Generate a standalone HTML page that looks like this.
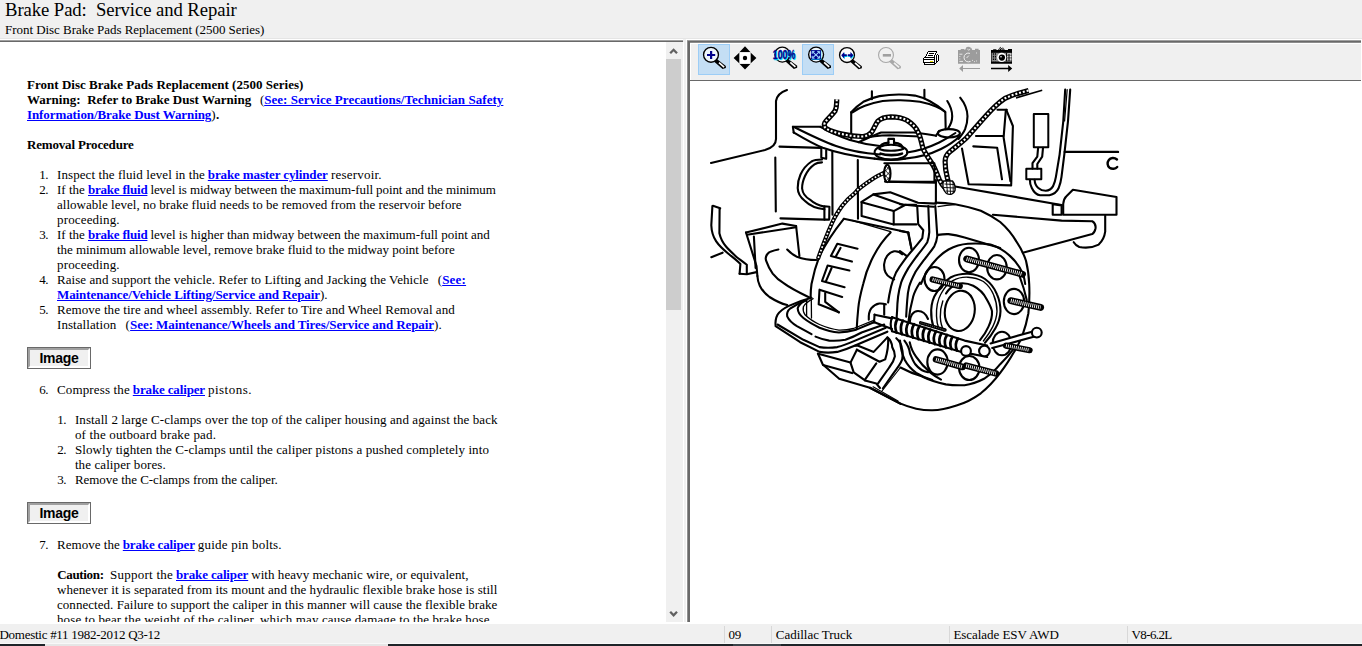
<!DOCTYPE html>
<html><head><meta charset="utf-8"><title>Brake Pad: Service and Repair</title>
<style>
html,body{margin:0;padding:0;}
body{width:1362px;height:646px;overflow:hidden;background:#f0f0f0;font-family:"Liberation Serif",serif;color:#000;position:relative;}
.abs{position:absolute;}
#hdr1{left:5px;top:-1px;font-size:18.67px;line-height:22px;white-space:pre;letter-spacing:-0.065px;}
#hdr2{left:5px;top:22px;font-size:13px;line-height:15px;white-space:pre;letter-spacing:-0.043px;}
#left{left:0;top:42px;width:666px;height:580px;background:#fff;overflow:hidden;}
#leftborder{left:0;top:39px;width:683px;height:3px;background:linear-gradient(#fff 0,#fff 1px,#a0a0a0 1px,#a0a0a0 2px,#696969 2px);}
#sb{left:666px;top:42px;width:17px;height:580px;background:#f0f0f0;border-right:1px solid #fff;}
#thumb{left:666px;top:59px;width:15px;height:251px;background:#cdcdcd;}
.ln{position:absolute;font-size:13px;line-height:15px;height:15px;white-space:pre;}
b.ln{font-weight:bold;}
a.ln{color:#0000ff;font-weight:bold;text-decoration:underline;}
.btn{position:absolute;left:27px;width:62px;height:20px;border:1px solid #696969;background:#f0f0f0;box-sizing:content-box;}
.btn i{position:absolute;left:0;top:0;right:0;bottom:0;border-style:solid;border-width:2px;border-color:#a0a0a0 #fff #fff #a0a0a0;}
.btn span{position:absolute;left:0;right:0;top:1.75px;text-align:center;font:bold 14px/16px "Liberation Sans",sans-serif;letter-spacing:-0.3px;}
#rightborder{left:690px;top:42px;width:672px;height:580px;background:#fff;}
#status{left:0;top:624px;width:1362px;height:20px;background:#f0f0f0;}
.st{position:absolute;top:627px;font-size:13px;line-height:15px;white-space:pre;}
</style></head><body>
<div class="abs" id="hdr1">Brake Pad:  Service and Repair</div>
<div class="abs" id="hdr2">Front Disc Brake Pads Replacement (2500 Series)</div>
<div class="abs" style="left:0;top:38px;width:1362px;height:1px;background:#e5e5e5;"></div>
<div class="abs" id="leftborder"></div>
<div class="abs" id="left">
<!--LT0-->
<b class="ln" id="sg0" style="left:27.0px;top:35px;letter-spacing:0.017px;">Front Disc Brake Pads Replacement (2500 Series)</b>
<b class="ln" id="sg1" style="left:27.0px;top:50px;letter-spacing:0.021px;">Warning:  Refer to Brake Dust Warning</b>
<span class="ln" id="sg2" style="left:260.0px;top:50px;">(</span>
<a class="ln" id="sg3" style="left:264.2px;top:50px;letter-spacing:0.047px;">See: Service Precautions/Technician Safety</a>
<a class="ln" id="sg4" style="left:27.0px;top:65px;letter-spacing:-0.085px;">Information/Brake Dust Warning</a>
<span class="ln" id="sg5" style="left:211.3px;top:65px;">)</span>
<b class="ln" id="sg6" style="left:216.0px;top:65px;">.</b>
<b class="ln" id="sg7" style="left:27.0px;top:95px;letter-spacing:-0.173px;">Removal Procedure</b>
<span class="ln" id="sg8" style="left:39.3px;top:125px;letter-spacing:-0.500px;">1.</span>
<span class="ln" id="sg9" style="left:39.3px;top:140px;letter-spacing:-0.500px;">2.</span>
<span class="ln" id="sg10" style="left:39.3px;top:185px;letter-spacing:-0.500px;">3.</span>
<span class="ln" id="sg11" style="left:39.3px;top:230px;letter-spacing:-0.500px;">4.</span>
<span class="ln" id="sg12" style="left:39.3px;top:260px;letter-spacing:-0.500px;">5.</span>
<span class="ln" id="sg13" style="left:39.3px;top:340px;letter-spacing:-0.500px;">6.</span>
<span class="ln" id="sg14" style="left:39.3px;top:495px;letter-spacing:-0.500px;">7.</span>
<span class="ln" id="sg15" style="left:57.3px;top:370px;letter-spacing:-0.500px;">1.</span>
<span class="ln" id="sg16" style="left:57.3px;top:400px;letter-spacing:-0.500px;">2.</span>
<span class="ln" id="sg17" style="left:57.3px;top:430px;letter-spacing:-0.500px;">3.</span>
<span class="ln" id="sg18" style="left:57.0px;top:125px;letter-spacing:0.081px;">Inspect the fluid level in the</span>
<a class="ln" id="sg19" style="left:207.8px;top:125px;letter-spacing:-0.121px;">brake master cylinder</a>
<span class="ln" id="sg20" style="left:331.0px;top:125px;letter-spacing:0.207px;">reservoir.</span>
<span class="ln" id="sg21" style="left:57.0px;top:140px;letter-spacing:0.017px;">If the</span>
<a class="ln" id="sg22" style="left:88.0px;top:140px;letter-spacing:-0.215px;">brake fluid</a>
<span class="ln" id="sg23" style="left:150.4px;top:140px;letter-spacing:-0.095px;">level is midway between the maximum-full point and the minimum</span>
<span class="ln" id="sg24" style="left:57.0px;top:155px;letter-spacing:0.027px;">allowable level, no brake fluid needs to be removed from the reservoir before</span>
<span class="ln" id="sg25" style="left:57.0px;top:170px;letter-spacing:0.162px;">proceeding.</span>
<span class="ln" id="sg26" style="left:57.0px;top:185px;letter-spacing:0.017px;">If the</span>
<a class="ln" id="sg27" style="left:88.0px;top:185px;letter-spacing:-0.215px;">brake fluid</a>
<span class="ln" id="sg28" style="left:150.4px;top:185px;letter-spacing:-0.017px;">level is higher than midway between the maximum-full point and</span>
<span class="ln" id="sg29" style="left:57.0px;top:200px;letter-spacing:-0.049px;">the minimum allowable level, remove brake fluid to the midway point before</span>
<span class="ln" id="sg30" style="left:57.0px;top:215px;letter-spacing:0.162px;">proceeding.</span>
<span class="ln" id="sg31" style="left:57.0px;top:230px;letter-spacing:0.060px;">Raise and support the vehicle. Refer to Lifting and Jacking the Vehicle</span>
<span class="ln" id="sg32" style="left:437.8px;top:230px;">(</span>
<a class="ln" id="sg33" style="left:442.2px;top:230px;letter-spacing:0.198px;">See:</a>
<a class="ln" id="sg34" style="left:57.0px;top:245px;letter-spacing:-0.091px;">Maintenance/Vehicle Lifting/Service and Repair</a>
<span class="ln" id="sg35" style="left:320.0px;top:245px;">).</span>
<span class="ln" id="sg36" style="left:57.0px;top:260px;letter-spacing:0.050px;">Remove the tire and wheel assembly. Refer to Tire and Wheel Removal and</span>
<span class="ln" id="sg37" style="left:57.0px;top:275px;letter-spacing:0.067px;">Installation</span>
<span class="ln" id="sg38" style="left:125.4px;top:275px;">(</span>
<a class="ln" id="sg39" style="left:130.1px;top:275px;letter-spacing:-0.079px;">See: Maintenance/Wheels and Tires/Service and Repair</a>
<span class="ln" id="sg40" style="left:434.1px;top:275px;">).</span>
<span class="ln" id="sg41" style="left:57.0px;top:340px;letter-spacing:0.147px;">Compress the</span>
<a class="ln" id="sg42" style="left:132.8px;top:340px;letter-spacing:-0.140px;">brake caliper</a>
<span class="ln" id="sg43" style="left:208.0px;top:340px;letter-spacing:0.476px;">pistons.</span>
<span class="ln" id="sg44" style="left:74.9px;top:370px;letter-spacing:0.097px;">Install 2 large C-clamps over the top of the caliper housing and against the back</span>
<span class="ln" id="sg45" style="left:74.9px;top:385px;letter-spacing:0.169px;">of the outboard brake pad.</span>
<span class="ln" id="sg46" style="left:74.9px;top:400px;letter-spacing:0.092px;">Slowly tighten the C-clamps until the caliper pistons a pushed completely into</span>
<span class="ln" id="sg47" style="left:74.9px;top:415px;letter-spacing:0.097px;">the caliper bores.</span>
<span class="ln" id="sg48" style="left:74.9px;top:430px;letter-spacing:-0.039px;">Remove the C-clamps from the caliper.</span>
<span class="ln" id="sg49" style="left:57.0px;top:495px;letter-spacing:0.043px;">Remove the</span>
<a class="ln" id="sg50" style="left:122.8px;top:495px;letter-spacing:-0.155px;">brake caliper</a>
<span class="ln" id="sg51" style="left:197.8px;top:495px;letter-spacing:0.217px;">guide pin bolts.</span>
<b class="ln" id="sg52" style="left:57.2px;top:525px;letter-spacing:-0.328px;">Caution:</b>
<span class="ln" id="sg53" style="left:110.1px;top:525px;letter-spacing:0.244px;">Support the</span>
<a class="ln" id="sg54" style="left:176.0px;top:525px;letter-spacing:-0.140px;">brake caliper</a>
<span class="ln" id="sg55" style="left:251.2px;top:525px;letter-spacing:0.063px;">with heavy mechanic wire, or equivalent,</span>
<span class="ln" id="sg56" style="left:57.0px;top:540px;letter-spacing:0.050px;">whenever it is separated from its mount and the hydraulic flexible brake hose is still</span>
<span class="ln" id="sg57" style="left:57.0px;top:555px;letter-spacing:0.042px;">connected. Failure to support the caliper in this manner will cause the flexible brake</span>
<span class="ln" id="sg58" style="left:57.0px;top:570px;letter-spacing:0.117px;">hose to bear the weight of the caliper, which may cause damage to the brake hose</span>
<div class="btn" style="top:305px"><i></i><span>Image</span></div>
<div class="btn" style="top:460px"><i></i><span>Image</span></div>
<!--LT1-->
</div>
<div class="abs" id="sb"></div>
<div class="abs" id="thumb"></div>
<svg class="abs" style="left:666px;top:42px" width="17" height="580" viewBox="666 42 17 580" fill="none" stroke="#606060" stroke-width="2.3"><path d="M670.2 53.3 L673.6 49.8 L677 53.3"/><path d="M670.2 611.8 L673.6 615.3 L677 611.8"/></svg>
<div class="abs" id="rightborder"></div>
<!--R0-->
<div class="abs" style="left:690px;top:43px;width:672px;height:37px;background:#f0f0f0;border-top:1px solid #fff;border-left:1px solid #fff;box-sizing:border-box;"></div>
<div class="abs" style="left:690px;top:80px;width:672px;height:1px;background:#696969;"></div>
<div class="abs" style="left:698px;top:44px;width:32px;height:31px;box-sizing:border-box;background:#c4def4;border:1px solid #9ccdf6;"></div>
<div class="abs" style="left:802px;top:44px;width:32px;height:31px;box-sizing:border-box;background:#c4def4;border:1px solid #9ccdf6;"></div>
<svg class="abs" style="left:689px;top:42px" width="673" height="38" viewBox="689 42 673 38">
<defs>
<g id="mag">
<path d="M5.2 3.8 L14.9 11.2 L14.9 13.2 L11.6 14.3 L2.9 6.6 Z" fill="#000"/>
<path d="M8 7.8 L13.1 12.3" stroke="#fff" stroke-width="1.7"/>
<circle cx="0" cy="0" r="7.45" fill="#fff" fill-opacity="0.7" stroke="#000" stroke-width="1.35"/>
</g>
<g id="magd">
<path d="M5.2 3.8 L14.9 11.2 L14.9 13.2 L11.6 14.3 L2.9 6.6 Z" fill="#a8a8a8"/>
<path d="M8 7.8 L13.1 12.3" stroke="#f0f0f0" stroke-width="1.7"/>
<circle cx="0" cy="0" r="7.45" fill="#f0f0f0" stroke="#a8a8a8" stroke-width="1.1"/>
</g>
</defs>
<!-- zoom in -->
<use href="#mag" x="711" y="54.8"/>
<path d="M707 55 H715.2 M711.1 51 V59" stroke="#00008b" stroke-width="2.2"/>
<!-- pan -->
<path d="M745 46.3 L750.6 52.2 H739.4 Z M745 69.5 L750.6 63.8 H739.4 Z M733.6 58 L739.5 52.5 V63.5 Z M756.4 58 L750.5 52.5 V63.5 Z" fill="#000"/>
<rect x="739.6" y="52.3" width="10.8" height="11.4" fill="#fff"/>
<circle cx="745" cy="58" r="2.2" fill="#000"/>
<!-- 100% -->
<use href="#mag" x="782.3" y="54.6"/>
<text x="773.4" y="59.7" font-family="Liberation Sans, sans-serif" font-weight="bold" font-size="12" textLength="22.5" lengthAdjust="spacingAndGlyphs" fill="#00e5ff" stroke="#00e5ff" stroke-width="0.3">100%</text>
<text x="772.8" y="59" font-family="Liberation Sans, sans-serif" font-weight="bold" font-size="12" textLength="22.5" lengthAdjust="spacingAndGlyphs" fill="#00008b" stroke="#00008b" stroke-width="0.3">100%</text>
<!-- fit -->
<use href="#mag" x="816.1" y="54.6"/>
<rect x="811.3" y="50.6" width="10" height="9.4" fill="#00e5ff"/>
<rect x="810.9" y="50.1" width="10" height="9.4" fill="#00008b"/>
<path d="M812.6 51.8 L819.2 57.9 M819.2 51.8 L812.6 57.9" stroke="#9fd8ff" stroke-width="1.1"/>
<path d="M812.2 53.8 V51.4 H814.6 M817.2 51.4 H819.6 V53.8 M819.6 55.8 V58.2 H817.2 M814.6 58.2 H812.2 V55.8" stroke="#9fd8ff" stroke-width="1" fill="none"/>
<!-- fit width -->
<use href="#mag" x="847" y="55"/>
<path d="M841.8 56 l3 -3.2 v2.2 h2.6 v2 h-2.6 v2.2 z M854 56 l-3 -3.2 v2.2 h-2.6 v2 h2.6 v2.2 z" fill="#00e5ff"/>
<path d="M841.2 55.3 l3 -3.2 v2.2 h2.6 v2 h-2.6 v2.2 z M853.4 55.3 l-3 -3.2 v2.2 h-2.6 v2 h2.6 v2.2 z" fill="#00008b"/>
<!-- zoom out disabled -->
<use href="#magd" x="886" y="55"/>
<rect x="882.8" y="54" width="8.2" height="2.6" fill="#a0a0a0"/>
<!-- print -->
<g shape-rendering="crispEdges" stroke="none">
<rect x="928" y="51" width="9" height="1" fill="#000"/>
<rect x="927" y="52" width="1" height="1" fill="#000"/>
<rect x="928" y="52" width="8" height="1" fill="#fff"/>
<rect x="936" y="52" width="1" height="1" fill="#000"/>
<rect x="927" y="53" width="1" height="1" fill="#000"/>
<rect x="928" y="53" width="1" height="1" fill="#fff"/>
<rect x="929" y="53" width="5" height="1" fill="#000"/>
<rect x="934" y="53" width="1" height="1" fill="#fff"/>
<rect x="935" y="53" width="1" height="1" fill="#000"/>
<rect x="926" y="54" width="1" height="1" fill="#000"/>
<rect x="927" y="54" width="8" height="1" fill="#fff"/>
<rect x="935" y="54" width="1" height="1" fill="#000"/>
<rect x="936" y="54" width="1" height="1" fill="#fff"/>
<rect x="937" y="54" width="1" height="1" fill="#000"/>
<rect x="926" y="55" width="1" height="1" fill="#000"/>
<rect x="927" y="55" width="1" height="1" fill="#fff"/>
<rect x="928" y="55" width="5" height="1" fill="#000"/>
<rect x="933" y="55" width="1" height="1" fill="#fff"/>
<rect x="934" y="55" width="1" height="1" fill="#000"/>
<rect x="935" y="55" width="1" height="1" fill="#fff"/>
<rect x="936" y="55" width="1" height="1" fill="#000"/>
<rect x="937" y="55" width="1" height="1" fill="#fff"/>
<rect x="938" y="55" width="1" height="1" fill="#000"/>
<rect x="925" y="56" width="1" height="1" fill="#000"/>
<rect x="926" y="56" width="8" height="1" fill="#fff"/>
<rect x="934" y="56" width="1" height="1" fill="#000"/>
<rect x="935" y="56" width="1" height="1" fill="#fff"/>
<rect x="936" y="56" width="1" height="1" fill="#000"/>
<rect x="937" y="56" width="1" height="1" fill="#fff"/>
<rect x="938" y="56" width="1" height="1" fill="#000"/>
<rect x="924" y="57" width="11" height="1" fill="#000"/>
<rect x="935" y="57" width="1" height="1" fill="#fff"/>
<rect x="936" y="57" width="1" height="1" fill="#000"/>
<rect x="937" y="57" width="1" height="1" fill="#fff"/>
<rect x="938" y="57" width="1" height="1" fill="#000"/>
<rect x="923" y="58" width="1" height="1" fill="#000"/>
<rect x="924" y="58" width="10" height="1" fill="#fff"/>
<rect x="934" y="58" width="1" height="1" fill="#000"/>
<rect x="935" y="58" width="1" height="1" fill="#fff"/>
<rect x="936" y="58" width="1" height="1" fill="#000"/>
<rect x="937" y="58" width="1" height="1" fill="#fff"/>
<rect x="938" y="58" width="1" height="1" fill="#000"/>
<rect x="923" y="59" width="12" height="1" fill="#000"/>
<rect x="935" y="59" width="1" height="1" fill="#fff"/>
<rect x="936" y="59" width="1" height="1" fill="#000"/>
<rect x="937" y="59" width="1" height="1" fill="#fff"/>
<rect x="938" y="59" width="1" height="1" fill="#000"/>
<rect x="923" y="60" width="1" height="1" fill="#000"/>
<rect x="924" y="60" width="10" height="1" fill="#fff"/>
<rect x="934" y="60" width="1" height="1" fill="#000"/>
<rect x="935" y="60" width="1" height="1" fill="#fff"/>
<rect x="936" y="60" width="1" height="1" fill="#000"/>
<rect x="937" y="60" width="1" height="1" fill="#fff"/>
<rect x="938" y="60" width="1" height="1" fill="#000"/>
<rect x="923" y="61" width="1" height="1" fill="#000"/>
<rect x="924" y="61" width="6" height="1" fill="#fff"/>
<rect x="930" y="61" width="3" height="1" fill="#e8e000"/>
<rect x="933" y="61" width="1" height="1" fill="#fff"/>
<rect x="934" y="61" width="1" height="1" fill="#000"/>
<rect x="935" y="61" width="1" height="1" fill="#fff"/>
<rect x="936" y="61" width="2" height="1" fill="#000"/>
<rect x="923" y="62" width="12" height="1" fill="#000"/>
<rect x="935" y="62" width="1" height="1" fill="#fff"/>
<rect x="936" y="62" width="1" height="1" fill="#000"/>
<rect x="924" y="63" width="1" height="1" fill="#000"/>
<rect x="925" y="63" width="9" height="1" fill="#fff"/>
<rect x="934" y="63" width="2" height="1" fill="#000"/>
<rect x="924" y="64" width="11" height="1" fill="#000"/>
</g>
<!-- camera disabled -->
<g>
<path d="M958 50 H960.5 L961 49 H964 L965 50 L966.6 47 L969 46.8 L971.4 48 L972.2 50 H975 V48.8 H978.6 V50 H980 V63.8 H958 Z" fill="#9c9c9c"/>
<path d="M970 53.4 a4.4 4.4 0 1 0 0.4 8" stroke="#f0f0f0" stroke-width="1" fill="none"/>
<path d="M966.6 58 l2.2 -2.4" stroke="#f0f0f0" stroke-width="0.9"/>
<path d="M959.4 54.2 h3 M959.4 61.4 h3.6" stroke="#f0f0f0" stroke-width="0.9"/>
<path d="M959.4 56.5 h0.9 M959.4 59 h0.9 M976 53 h0.9 M967.4 49.2 l1.4 1 1.4 -1 M969.4 61.6 h0.9 M972 60.4 h0.9 M974 61.6 h0.9 M976 61 h0.9" stroke="#f0f0f0" stroke-width="0.9" fill="none"/>
<path d="M959.2 68.5 L963 65 V68 H980 V69 H963 V72 Z" fill="#9c9c9c"/>
</g>
<!-- camera enabled -->
<g>
<path d="M991 50 H993 L993.4 49.2 H996 L996.8 50 H998 L1000.4 46.8 L1001.2 48.2 L1003 47.6 L1005 50 H1008 V49 H1012 V50 V63.8 H991 Z" fill="#000"/>
<rect x="991.6" y="52.8" width="20" height="8.8" fill="#8c8c8c"/>
<path d="M999 49.6 l1.4 -1.2 1.2 1 1.6 -0.8 1 1.2" stroke="#f0f0f0" stroke-width="0.8" fill="none"/>
<path d="M993.4 53.2 v8 M995.4 53.2 v8" stroke="#000" stroke-width="1.1" stroke-dasharray="1.6 1"/>
<path d="M1007 54 h4.4 M1007 56.6 h4.4 M1007 59.2 h4.4" stroke="#fff" stroke-width="0.9"/>
<path d="M1006.6 53 v8.4 M1009 54 v7" stroke="#000" stroke-width="1"/>
<circle cx="1001.7" cy="57.4" r="4.6" fill="#fff"/>
<circle cx="1001.9" cy="57.6" r="3.1" fill="#000"/>
<circle cx="1001" cy="56.8" r="0.8" fill="#fff"/>
<path d="M1012.2 68.5 L1008.2 65 V67.8 H991 V69.2 H1008.2 V72 Z" fill="#000"/>
</g>
</svg>
<!--D0-->
<svg class="abs" style="left:689px;top:81px" width="672" height="541" viewBox="689 81 672 541" fill="none" stroke="#000" stroke-width="2.1" stroke-linecap="round" stroke-linejoin="round">
<!-- ===== top-left body lines ===== -->
<g id="g-body">
<path d="M787 90 C781 92 777 95 776 101 L776 139 C776 145 772 148 765 150 L711 163"/>
<path d="M775.3 157.5 L775.8 211.5"/>
<path d="M779.5 146.6 L821 147.8" stroke-width="2.2"/>
<path d="M780.5 218.3 L824.4 219.6" stroke-width="2.2"/>
<path d="M832.3 151.9 L832.5 214.7"/>
<path d="M857.8 160 L858 218.8"/>
<path d="M821.3 148.6 V157.5 M826.2 150.2 V158.5 M821.3 157.8 L826.2 158.8"/>
<!-- C bracket double curve -->
<path d="M822 159.5 C817 159.6 814 160 811.5 161.5 C807 164.5 803 169 800.5 174.5 C798.5 179 797.6 184 797.7 188 C797.8 193 800.5 197.5 805 201 C810 206 817 208.5 824.4 209.3"/>
<path d="M822 162.4 C819 162.5 816.5 163 814.5 164.3 C810.5 167 807.3 171 805 176 C803 180.5 802 185 802.1 188.5 C802.6 193 805.5 197 809.9 199.6 C814 203.5 819 205.6 824.4 206.6"/>
<path d="M824.4 206.2 L829.4 206.8 L829.2 219.6 L824.4 219.6 Z"/>
</g>
<!-- ===== upper control arm ===== -->
<g id="g-uca">
<path d="M792.9 126.8 L820.4 126.8"/>
<path d="M792.9 126.8 L793.7 132.5"/>
<path d="M793.7 132.5 C803 138 813 144 822.8 147.8 C840 154 858 157 874.5 158.6"/>
<path d="M795 127.5 C808 134 822 141 836 146 C850 151 866 153.5 880 154.5"/>
<path d="M820.4 126.8 C828 131 838 136 850 140 C860 143 870 145 880 146"/>
<path d="M858.5 142.2 C866 139 874 135 881.1 132.5 L913.4 132.5 C921 133 929 134.5 936 135.7"/>
<path d="M862 138.6 C870 136.5 880 135.5 890 135.3 L920 136.5"/>
<path d="M936 135.7 L939.2 130.8"/>
<ellipse cx="948.9" cy="133.3" rx="11" ry="4.2"/>
<path d="M907 152.5 C918 151 930 147 939.2 142.5 C946 139 951 136 955.4 133"/>
<path d="M905 158.6 C918 157.5 931 154 941 149 C950 144.5 956 140 960 136"/>
<path d="M874.5 158.6 C884 160 896 160.5 905 158.6"/>
<!-- ball joint nut -->
<ellipse cx="891" cy="152.2" rx="16.4" ry="7.4"/>
<path d="M879.5 149 C879.5 145 883 143 888.4 142.6 M894 142.6 C899 143 902.9 145 902.9 149"/>
<path d="M888.4 145 V138.9 H894 V145"/>
<path d="M879.5 149 C884 151.3 898 151.3 902.9 149"/>
<path d="M880.5 153.6 C886 155.6 897 155.6 902 153.6" stroke-width="2.6"/>
</g>
<!-- ===== spring seat ===== -->
<g id="g-spring">
<path d="M871.9 91.3 V99.3 M924.4 89.7 V98.5"/>
<path d="M851.2 112.3 C855 108 859 104.5 863.3 101.8 C869 99 874 97.2 879.5 96.1 C886 95 892 94.5 898.9 94.5 C905 94.6 910 95 915 95.6 C920 96.8 925 98.5 929.5 101 C935 104 940 107.5 944.9 111.5"/>
<path d="M852.5 112.5 C856 110 860 107.5 864.9 105.8 C871 103.5 877 102 882.7 101 C889 100.3 895 100.1 900.5 100.2 C907 100.4 913 100.9 919.9 101.8 C926 103 931 104.5 936 106.6 C940 108.3 943 110 945.2 112"/>
<path d="M851.2 112.3 V138.9"/>
<path d="M945.3 112 L945.7 129.2"/>
<path d="M947.3 101 C950.5 106 952.2 111 952.2 116.3 C952.2 121 950.5 125 948.1 128.4"/>
<path d="M960.2 97.7 C964.5 103 967.3 109 967.5 116.3 C967.5 121 966.5 125.5 965.1 129.2 C963.5 133 961 136 958.6 138.9"/>
</g>
<!-- ===== right box & connector ===== -->
<g id="g-box">
<path d="M997.5 109.8 H1006.8"/>
<path d="M1006.3 109.8 L1012.9 126 L1011.2 184.4"/>
<path d="M1005.8 110.7 L1003.6 137.3 L1010.4 181"/>
<path d="M976 136 H1003.2"/>
<path d="M973.3 146.4 L997.2 147.8 L1002 179.3"/>
<path d="M962 148.6 L968.6 184.2 L1011.2 185.4"/>
<rect x="1033.8" y="113.9" width="14.5" height="33.3" stroke-width="2"/>
<path d="M1038.1 147.8 L1037.3 156.7 L1032.5 163.2 L1032.5 168.6"/>
<path d="M1043 147.8 L1042.2 156.7 L1037.3 164 L1037.3 168.6"/>
<rect x="1026.3" y="168.8" width="15" height="10.5" stroke-width="2"/>
<!-- U tube -->
<path d="M1029.9 179.8 C1029.8 183 1030.5 185.5 1031.8 188 C1034 192.5 1037 195 1040.1 195.2 L1049.4 195.2 C1053.5 194.5 1056.8 192 1058.7 188 C1060 184.5 1061 181 1061.5 176.9 L1064.3 154.6 L1068 121.1 L1070.2 89.6"/>
<path d="M1034.6 179.8 C1034.8 183.5 1036 186.2 1038.3 188 C1040.5 190 1043 190.8 1045.7 190.8 C1049 190.6 1051.5 188.8 1053.1 186.1 C1054.6 183 1055.4 180 1055.9 176.9 L1059.6 154.6 L1063.3 121.1 L1065.2 89.6"/>
<path d="M1067.2 89.6 L1064.6 121" stroke-width="1.2"/>
<path d="M1064.8 151.9 H1118" stroke-width="2.4"/>
<path d="M1117 159.5 C1114.5 157.3 1110.5 157.5 1108.8 160 C1107 162.5 1107.2 166 1109.6 167.8 C1112 169.4 1115.5 169 1117.2 167" stroke-width="2.4"/>
</g>
<!-- ===== left bracket & knuckle ===== -->
<g id="g-knuckle">
<path d="M712.9 205.8 L720.2 208.3"/>
<path d="M712.4 206 L711.3 225.2 C711.5 231 713 236.5 716.2 241.4 C720 247 725 251 729.1 254.3 C733 257.5 737 260.5 740.4 264 L739.6 273.7"/>
<path d="M719.6 209 L719.4 233.3 C720.5 238 722.5 242.5 725.8 246.2 C729 250 733.5 254 737.2 257.5 C740.5 260 744 262.5 746.8 264.8 L746.8 273.7"/>
<path d="M739.6 273.7 L746.8 274.2 L756.5 272.1"/>
<path d="M711.3 257.2 L722.6 252.7"/>
<path d="M746 232.5 L782.4 223.6 L796.1 226"/>
<path d="M747 234.8 L796.1 227.2"/>
<path d="M746 232.5 L756.5 266 L757.4 276"/>
<path d="M753.9 236.5 L755.6 268"/>
<path d="M796.1 226 L799.4 255.9"/>
<path d="M778.4 249.5 C773 250.5 769.5 251.5 767.9 253.5 C765.5 256 765.3 258.5 766.2 260.8 C768 266 770 270 772.7 273.7 C776 278 780 281 784 283.4 C790 288 800 293 809.9 297.8"/>
<path d="M787.2 249.5 C790 252.5 793 255 796.9 256.7 C803 259 810 260 816.3 260"/>
<path d="M757.4 276 C757.6 280 758.5 283 759.8 285.7 C762 290.5 765.5 294 769.5 297 C775 300.5 781 303.5 787.2 305.1"/>
</g>
<!-- ===== brake pad block ===== -->
<g id="g-pad">
<path d="M861.6 201.8 L873.4 194.4 L890.2 192.3 L918 202.8 L936 203.6"/>
<path d="M861.6 202.2 L893.7 211.1 L905.5 204.8 L916 204.8"/>
<path d="M873.4 194.4 L902.7 204.8"/>
<path d="M861.6 202 V216 L893.7 224.4 L916.4 224.4"/>
<path d="M893.7 211.1 V224.4"/>
<path d="M885 181.6 L936 182.6"/>
<path d="M916.2 205.8 L933.9 206.7"/>
<path d="M900 204.2 L917.2 206 L918.2 224.1 C920 226.5 922 228.5 923.3 230.2 L922.3 238.2 C919.5 242 916 245.8 913.2 249.3 C910 253 907 256.5 904.2 260.3 C901 264.5 898.5 268.3 896.1 272.4 C894 277 892.3 281.5 891.1 286.5 C889.8 292 888.8 297 888.1 302.5"/>
<path d="M900 230.9 L908 232.5 L911.3 247.9"/>
</g>
<!-- ===== caliper ===== -->
<g id="g-caliper">
<path d="M843.8 218.8 L908.4 232.5"/>
<path d="M851.9 220.4 L890.6 231.7" stroke-width="1.3"/>
<path d="M843.8 218.8 C834 231 826 243 819.5 255.9 C816 265 813.5 274 811.5 284 C810.8 289 810.6 293 810.7 297"/>
<path d="M908.4 232.5 L911.6 249.5"/>
<path d="M890.6 232.5 C882 241 876 250.5 871.2 260.8 C867.5 268.5 865 276 863.2 284 C861 292 859 300 858.3 308 C857.5 316 857 323 856.7 329.3"/>
<path d="M902.2 254.3 C900 252 897 251 894.1 251.3 C888.5 252.5 884.5 258 884.1 264.3 C883.8 270.5 886 275 890.1 277.4 C891.5 278.3 892.8 279 894.1 279.4"/>
<!-- windows -->
<path d="M857.5 248.7 L837.3 243.8 L830.9 255.9 L851.9 261.6"/>
<path d="M840.5 247.9 L835.7 256.7"/>
<path d="M849.4 270.5 L827.6 265.6 L822 281 L844.6 287.3"/>
<path d="M831.6 268 L825.8 281.6"/>
<path d="M842.2 297 L819.5 289.7 L818.7 304.3 L838.9 312.3"/>
<path d="M825.2 293 L825.2 301.8 L838.9 312.3"/>
<path d="M806.6 300 L806.6 316 M811.3 300 L811.5 318" stroke-width="1.3"/>
<!-- right of caliper curved bracket -->
<path d="M928.3 206 L929.3 232.2 C929 236 928.3 239.5 927.3 242.2 C924.5 246.5 921.3 250.5 918.2 254.3 C914.8 259 911.3 263.6 908.2 268.4 C905.5 273 903 277.5 901.2 282.4 C899.8 287 898.7 291.7 898.1 296.5 C897.5 301.5 897.2 306 897.1 310.6 L896.6 318"/>
<path d="M935.3 206 L937.3 236.2 C936.8 240 935.8 243.5 934.3 246.3 C931.5 250.5 928.3 254.5 925.3 258.3 C921.8 263 918.3 267.6 915.2 272.4 C912.8 277 910.6 281.6 909.2 286.5 C908 291.3 907.4 296 907.2 300.5 C906.8 306 906.4 311.5 906.2 316.6"/>
<path d="M900 251 L906.5 255.9"/>
<path d="M920 282.5 C916.5 288 914.5 292 913.2 296.5 C911.2 304 909.5 312 908.6 320.6" />
<!-- guide pin boss -->
<path d="M868.8 319.6 C868.5 315 869.3 311 871.2 308.3 C873.5 305.5 876 304 879.3 303.5 C881.5 303.3 884 303.7 885.8 304.3"/>
<path d="M884.2 304.3 V314.8"/>
</g>
<!-- ===== lower arm / tie rod (right) ===== -->
<g id="g-lca">
<path d="M935.9 180 V201.8"/>
<path d="M955 186.5 L1061.6 205"/>
<path d="M1072.9 189.7 L1116.5 197 V214.7 H1063.2 V204 C1063.5 200.5 1064.5 198 1066.4 196.2 Z"/>
<path d="M1052.7 204.2 L1061.6 205.4 V214.7 H1052.7 Z"/>
<path d="M992.9 214.7 L1061.6 220.6 L1092.2 221.2 C1095 223 1096 225.5 1095.5 228.5 C1095 231 1094 233 1092.2 234.1 L1022.8 252.7"/>
<path d="M1105.2 215.5 V231.7 C1104.5 237 1102 241.5 1098.7 244.6 C1093 247.5 1086 248.3 1079.3 247 C1077 246 1075 244.3 1073.7 242.2"/>
</g>
<!-- ===== rotor ===== -->
<g id="g-rotor">
<!-- outer edge arc -->
<path d="M935.5 202.6 C942 202.6 949 203.2 955 204.2 C964 205.8 973 208 980.8 210.7 C988 214 994.5 217.7 1000.2 222 C1006.5 227.5 1012 234 1016.3 241.4 C1020.5 247.5 1023.8 254 1026 260.8 C1027.8 268 1028.8 276 1029.2 284 C1029.6 292 1029.4 303 1028.4 313.2 C1027 320.5 1025.2 327.5 1022.8 334.2 C1020.5 341 1017 347.5 1013.1 353.5 C1009.5 360 1005 366.5 1000.2 372.9 C994.5 380.5 988 387.5 980.8 393.3 C973 399 965 403 956.5 405.4 C948.5 408 940.5 410 932.3 410.3 C926.5 410.4 921.5 409.8 916.2 408.7 C910.5 407.4 905 405.6 900 403.4 L870 387.8"/>
<path d="M938 206.7 C944 205.5 950 204.8 955 204.6" stroke-width="1.2"/>
<path d="M1019.5 276 C1022.5 284 1025 292 1026.8 300.2" />
<!-- hat upper edge -->
<path d="M938 234.9 C942 234.2 945.5 234 948.5 234.1 C954 234.8 959.5 236 964.6 237.4 L1000.2 247.9"/>
<!-- hat ring -->
<path d="M921 284 C923.5 277 927.5 270 932.3 264 C937 258 942.5 253 948.5 249.5 C954.5 246.3 961 244.3 967.9 243.8 C975.5 243.3 983.5 243.6 990.5 244.6 C998 247 1004.5 251 1009.9 255.9 C1015.5 261 1020 267 1022.8 273.7 C1024 277 1024.8 280.5 1025.2 284"/>
<!-- hat bottom arc -->
<path d="M900.5 367.5 C907 371 914 374 921.6 376.3 C929 380 937 382.5 945.8 384.4 C952 385.3 958 385.5 964.6 385.2 C971.5 384.3 978 382 984 378.8 C990 375 995.5 370 1000.2 364.2 C1005 359.5 1009.5 354.5 1013.1 349.7"/>
<!-- inner left arcs -->
<path d="M900 340.6 C900.5 347.5 902 354 904.8 360 C907.5 365 911.5 369.5 916.2 372.9 C921 376 927 378.5 932.3 380"/>
<path d="M909.7 342.2 C910.8 347.5 913 352.5 916.2 356.8 C920 362.5 925 368 930.7 372.9 C934.5 376 938 378 941 379.6"/>
</g>
<!-- ===== hub ===== -->
<g id="g-hub">
<ellipse cx="959.8" cy="310.9" rx="14.9" ry="20.2" transform="rotate(8 959.8 310.9)"/>
<path d="M933.5 327 C931.8 322 931 316 931.2 310 C931.5 303 933.5 297 936.6 292.6 C940.5 286 945.5 281 951 277.2 C956 274.8 962 273.6 968 273.8 C974.5 274.2 980.5 276 985 279 C990.5 283 994.5 288 997 294.3 C999.3 299.5 1000.5 305 1000.5 311.3 C1000.3 317.5 998.5 323 995.4 328.3 C992.5 333.5 989 338.5 985 342.8"/>
<path d="M939 329 C937.4 325 936.6 321 936.5 316 C936.3 309 937 301 940.9 294 C944 288 948 283.5 952.8 280.6 C957.5 278 962.5 276.9 968 277.2 C973.5 277.5 979 279 983.4 281.5 C988 285 991.5 289.5 993.7 295.1 C995.8 300 997 305.5 997 311.3 C996.8 316.5 995.3 321.5 992.8 326.6 C990.2 331.8 987 336.5 983.4 341" stroke-width="1.4"/>
<path d="M946 293.5 C948.5 289.5 952 286 956.2 284.2 C962 282.6 968 283.3 973.2 285.8 C979 288.8 983.8 293.5 986.8 299.4 C989 303.5 991.2 307 992 311.3 C992.3 316.5 991 321.5 988.5 326.6 C986.3 331.5 983.5 336 980 340.2"/>
<path d="M944 331 C941.5 326.5 940.5 322 940.3 317 C940.2 312 941 306 942.8 301" stroke-width="1.4"/>
</g>
<!-- lug holes -->
<g id="g-lug">
<ellipse cx="969" cy="260" rx="10" ry="12.2"/>
<ellipse cx="996.9" cy="267.2" rx="9.8" ry="12.2"/>
<ellipse cx="934.5" cy="279" rx="10" ry="12"/>
<ellipse cx="1014" cy="301.5" rx="10.2" ry="12.6"/>
<ellipse cx="1002" cy="343.5" rx="9.4" ry="11.8"/>
<ellipse cx="937.5" cy="362" rx="10.2" ry="12.6"/>
<ellipse cx="969.3" cy="368" rx="10.2" ry="12"/>
<path d="M909.7 322.8 C909.7 316 913 311 918 311 C922 311 926 314 928 319"/>
</g>
<!-- ===== C-clamp body ===== -->
<g id="g-clamp">
<path d="M811.5 297.8 C803 300 795.5 302.8 788.9 305.9 C783.5 308.5 779.5 311.5 777.5 314.8 C775.8 318 775.2 322 775.6 326.1 L800.2 342.2 L819.5 351.9 C825 352.8 831 352.8 837.3 351.9 C843.5 350.3 849.5 348 855.1 345.5 L887.4 331.7"/>
<path d="M806.6 300.2 C800.5 302.5 795 305.2 790.5 308.3 C787.5 310.8 786.6 313.5 787.2 316.4 C789 320.5 792.5 323.5 796.9 326.1 L811.5 334.2"/>
<path d="M777.5 324.5 L803.4 339.8 L819.5 347.1 C825 348 831 348 837.3 347.1 C843.5 345.5 849.5 343 855.1 340.6 L885.8 327.7"/>
<path d="M815.5 336.6 C820 338.5 824.5 339.9 829.2 340.6 C834.5 341 840 340.7 845.4 339.8 C851 337.8 856.5 335.3 861.6 332.5 L884.2 324.5"/>
<path d="M805 300.2 C801 303 798.5 305.5 797.7 308.3 C797.8 312 800 315.3 803.4 318 C808.5 322 814 325 819.5 327.7 C826 330.3 832.5 332 838.9 332.5 C844.5 332.3 850 331.5 855.1 330.1 L874.5 322"/>
<path d="M813.1 298.6 C808.5 301 805 303.5 803.4 306.7 C802.8 309.5 803.3 312.3 805 314.8 C809 318.8 814 322 819.5 324.5 C826 327.3 832.5 329.3 838.9 330.1 C844 330.2 849 329.6 853.5 328.5 L873.7 320.4" stroke-width="1.3"/>
<!-- screw outline -->
<path d="M874.5 314.8 L892 318.4"/>
<path d="M873.7 322 L892 329"/>
<path d="M874.6 314.6 L874 322.5"/>
<path d="M892.2 317 C890.5 321 890.3 326.5 892 331.2"/>
<path d="M892 317.2 L964.6 340.6 L987.2 345.5"/>
<path d="M892 331.2 L961.4 351.9 L987.2 357"/>
<!-- coils -->
<g stroke-width="2.7">
<path d="M897.5 318.8 C895 323 894.8 328 896.5 332.5"/>
<path d="M903 320.6 C900.5 325 900.3 330 902 334.2"/>
<path d="M908.5 322.4 C906 326.5 905.8 331.5 907.5 335.8"/>
<path d="M914 324.2 C911.5 328.5 911.3 333.5 913 337.5"/>
<path d="M919.5 326 C917 330 916.8 335 918.5 339.2"/>
<path d="M925 327.8 C922.5 332 922.3 337 924 340.8"/>
<path d="M930.5 329.6 C928 333.8 927.8 338.6 929.5 342.5"/>
<path d="M936 331.4 C933.5 335.5 933.3 340.3 935 344.1"/>
<path d="M941.5 333.2 C939 337.3 938.8 342 940.5 345.8"/>
<path d="M947 335 C944.5 339 944.3 343.7 946 347.4"/>
<path d="M952.5 336.8 C950 340.8 949.8 345.3 951.5 349"/>
<path d="M958 338.6 C955.5 342.5 955.3 347 957 350.6"/>
</g>
<circle cx="966" cy="351" r="4.9" fill="#fff"/>
<circle cx="984.4" cy="351" r="5.3" fill="#fff"/>
<!-- handle -->
<path d="M990.6 343.4 L1033 331.4 L1034.6 336.6 L992.2 348 Z" fill="#fff" stroke="none"/>
<path d="M990.6 343.4 L1033 331.4"/>
<path d="M992.2 348 L1034.6 336.6"/>
<circle cx="1036.8" cy="332.6" r="4.9" fill="#fff"/>
</g>
<!-- ===== bottom bracket ===== -->
<g id="g-bot">
<path d="M817.9 353.5 L822.8 364.5 L839.2 378.8 L869.9 387.7 L900.5 403.8"/>
<path d="M873.1 386.8 L898 401" stroke-width="1.2"/>
<path d="M818.2 353.7 L850.5 362.6 L856.9 349.7"/>
<path d="M850.5 362.6 L853.7 372.3 L865 380.4"/>
<path d="M823 365 L852.1 373.1"/>
<path d="M855.1 345.8 L857.5 345.5 L873.7 351.9 L887.4 337.4"/>
<path d="M856.9 349.7 L879.5 361.8 L885.2 359.4 C887.5 352 888.5 345 888.2 338"/>
<path d="M876.3 363.4 L865 379.6"/>
<path d="M865 380.4 L876.3 383.6 L880 388"/>
<path d="M887.4 337.4 C890.5 340 892 343.5 892.2 347.1 C894.5 351 895 353.5 894.9 356.2 C894 360.5 892 364 889.2 367.5 L877.9 383.6"/>
<path d="M896.3 338.2 C899.5 341 901.5 344.5 901.9 348.7 C903 352 902.8 355.5 902.2 359.4 C900.5 364 897.5 368 894.1 372.3 L882.8 388.5"/>
<path d="M904.4 340.6 C907.5 344.5 909.5 349 910 353.5 C911.5 357 913 361 915.1 364 C919 369 923.5 371.5 928 372.3"/>
<path d="M900.5 367.5 L882 391" stroke-width="1.2"/>
</g>
<!-- ===== hoses ===== -->
<g id="g-hose" stroke-linecap="butt">
<path d="M836.8 99.3 L836.6 103 C836.6 106 836.2 108.5 835 111 C832 115.5 827 119 824.8 122.8 C823.6 125.5 824.3 127.3 826.2 128.6 C831 131.3 836.5 133 842.3 134.1 C849 135.6 856 136.7 863.3 136.5 C867 136 869.5 134.6 871.4 132.5 C874 129 875.3 124.5 877.9 121.2 C881 118.3 885.5 117 890.8 116.9 C896.5 117 902.5 118 906.9 120.3 C912 123.5 916 127.5 918.2 132.5 C920.8 137.5 921.5 143.5 923.1 148.6 C925.8 154.5 929.5 159.5 932.8 164.8 C935.5 169.5 937.2 174.5 939.2 179.3 C941 183 943 186 945.7 188.5" stroke="#000" stroke-width="5.2"/>
<path d="M836.8 99.3 L836.6 103 C836.6 106 836.2 108.5 835 111 C832 115.5 827 119 824.8 122.8 C823.6 125.5 824.3 127.3 826.2 128.6 C831 131.3 836.5 133 842.3 134.1 C849 135.6 856 136.7 863.3 136.5 C867 136 869.5 134.6 871.4 132.5 C874 129 875.3 124.5 877.9 121.2 C881 118.3 885.5 117 890.8 116.9 C896.5 117 902.5 118 906.9 120.3 C912 123.5 916 127.5 918.2 132.5 C920.8 137.5 921.5 143.5 923.1 148.6 C925.8 154.5 929.5 159.5 932.8 164.8 C935.5 169.5 937.2 174.5 939.2 179.3 C941 183 943 186 945.7 188.5" stroke="#fff" stroke-width="2.1" stroke-dasharray="2 1.9"/>
<path d="M1028.6 90.4 C1020 92.6 1012 95 1005 98.3 C998 103 992 109 986.5 115.3 C980 122.5 973 130.5 966.5 137.9 C961 143 955 147.5 949.5 152 C946.5 154.5 945.1 158 945.1 161.5 C945.1 167 945.9 172.5 947.3 177.7 C948 182 949.3 186 951 190" stroke="#000" stroke-width="5.2"/>
<path d="M1028.6 90.4 C1020 92.6 1012 95 1005 98.3 C998 103 992 109 986.5 115.3 C980 122.5 973 130.5 966.5 137.9 C961 143 955 147.5 949.5 152 C946.5 154.5 945.1 158 945.1 161.5 C945.1 167 945.9 172.5 947.3 177.7 C948 182 949.3 186 951 190" stroke="#fff" stroke-width="2.1" stroke-dasharray="2 1.9"/>
<path d="M886 172 C882 174 878 175.6 874.6 177.7 C869.5 181 864.5 184.3 860.1 188 C858 189.5 856.5 191 855.1 192.9 C850 197 846 201 842.2 205.8 C838.5 211 835 216.5 832.5 222 C829.5 228.5 826.8 235 824.4 241.4 C822 247.5 819.8 253.5 817.9 259.2" stroke="#000" stroke-width="4.2"/>
<path d="M886 172 C882 174 878 175.6 874.6 177.7 C869.5 181 864.5 184.3 860.1 188 C858 189.5 856.5 191 855.1 192.9 C850 197 846 201 842.2 205.8 C838.5 211 835 216.5 832.5 222 C829.5 228.5 826.8 235 824.4 241.4 C822 247.5 819.8 253.5 817.9 259.2" stroke="#fff" stroke-width="1.7" stroke-dasharray="1.8 1.8"/>
<path d="M1042.2 90.3 L1016 97.9" stroke-width="1.6"/>
<!-- hose end mesh -->
<path d="M943.5 181 C942 185 943 190.5 946.5 193.5 C950 195.5 954 194 955 190.5 C955.5 187 954.5 183.5 952.5 181 Z" fill="#fff" stroke="#000" stroke-width="1.4"/>
<path d="M944.5 184 L954 184.5 M944 187.5 L955 188 M945.5 191 L954.5 191.4 M946.5 181.5 L947.5 193.5 M950 181.5 L950.5 194.5 M953 182 L953.3 193" stroke="#000" stroke-width="0.9"/>
</g>
<!-- cylinder + rect below arm -->
<path d="M884.3 163.2 H934.4 V181.7 H889.2" stroke-width="2"/>
<ellipse cx="887.3" cy="173.5" rx="3.2" ry="8.8" fill="#fff"/>
<path d="M886 166 L889.5 170 M885 170 L890 175.5 M885 175 L889.5 180 M889.5 166.5 L885.5 171 M890 171.5 L885 177 M889.5 177 L886 181" stroke-width="0.8"/>
<!-- ===== studs ===== -->
<g id="g-studs" stroke-linecap="butt">
<path d="M966.6 258.9 L1022.6 274.2" stroke="#000" stroke-width="6.8" stroke-linecap="round"/>
<path d="M966.6 258.9 L1022.6 274.2" stroke="#fff" stroke-width="3.8" stroke-dasharray="0.9 1.1"/>
<path d="M932.6 279.4 L959.8 286.2" stroke="#000" stroke-width="6.2" stroke-linecap="round"/>
<path d="M932.6 279.4 L959.8 286.2" stroke="#fff" stroke-width="3.2" stroke-dasharray="0.9 1.1"/>
<path d="M1010.8 300.7 L1040.6 307.4" stroke="#000" stroke-width="7" stroke-linecap="round"/>
<path d="M1010.8 300.7 L1040.6 307.4" stroke="#fff" stroke-width="4.0" stroke-dasharray="0.9 1.1"/>
<path d="M1006 345.6 L1029.6 350.2" stroke="#000" stroke-width="6.2" stroke-linecap="round"/>
<path d="M1006 345.6 L1029.6 350.2" stroke="#fff" stroke-width="3.2" stroke-dasharray="0.9 1.1"/>
<path d="M936 359.4 L962.6 367" stroke="#000" stroke-width="6.6" stroke-linecap="round"/>
<path d="M936 359.4 L962.6 367" stroke="#fff" stroke-width="3.6" stroke-dasharray="0.9 1.1"/>
<path d="M966.2 365.6 L995.8 373.4" stroke="#000" stroke-width="6.6" stroke-linecap="round"/>
<path d="M966.2 365.6 L995.8 373.4" stroke="#fff" stroke-width="3.6" stroke-dasharray="0.9 1.1"/>
<path d="M920.6 322.8 L945 330" stroke="#000" stroke-width="3.4" stroke-linecap="round"/>
<path d="M920.6 322.8 L945 330" stroke="#fff" stroke-width="0.4" stroke-dasharray="0.9 1.1"/>
</g>
</svg>

<!--D1-->

<!--R1-->
<div class="abs" id="status"></div>
<!--S0-->
<div class="abs" style="left:0;top:622px;width:1362px;height:2px;background:#fff;"></div>
<div class="abs" style="left:684px;top:40px;width:2px;height:582px;background:#f0f0f0;"></div>
<div class="abs" style="left:686px;top:39px;width:1px;height:583px;background:#fff;"></div>
<div class="abs" style="left:686px;top:39px;width:676px;height:1px;background:#fff;"></div>
<div class="abs" style="left:687px;top:40px;width:1px;height:582px;background:#909090;"></div>
<div class="abs" style="left:688px;top:40px;width:2px;height:582px;background:#696969;"></div>
<div class="abs" style="left:687px;top:40px;width:675px;height:1px;background:#a0a0a0;"></div>
<div class="abs" style="left:688px;top:41px;width:673px;height:1px;background:#696969;"></div>
<div class="abs" style="left:690px;top:42px;width:671px;height:1px;background:#8c8c8c;"></div>
<div class="abs" style="left:1361px;top:40px;width:1px;height:584px;background:#fff;"></div>
<div class="st" style="left:-0.5px;letter-spacing:-0.27px;">Domestic #11 1982-2012 Q3-12</div>
<div class="st" style="left:728.6px;letter-spacing:-0.25px;">09</div>
<div class="st" style="left:775.8px;letter-spacing:-0.03px;">Cadillac Truck</div>
<div class="st" style="left:953.4px;letter-spacing:-0.05px;">Escalade ESV AWD</div>
<div class="st" style="left:1131.6px;letter-spacing:-0.62px;">V8-6.2L</div>
<div class="abs" style="left:724px;top:626px;width:1px;height:17px;background:#d8d8d8;"></div>
<div class="abs" style="left:771px;top:626px;width:1px;height:17px;background:#d8d8d8;"></div>
<div class="abs" style="left:949px;top:626px;width:1px;height:17px;background:#d8d8d8;"></div>
<div class="abs" style="left:1127px;top:626px;width:1px;height:17px;background:#d8d8d8;"></div>
<div class="abs" style="left:0;top:643px;width:1362px;height:1px;background:#f8f8f8;"></div>
<div class="abs" style="left:0;top:644px;width:1362px;height:2px;background:#1e2428;"></div>
<div class="abs" style="left:45px;top:644px;width:343px;height:2px;background:#e6e6e6;"></div>
<div class="abs" style="left:733px;top:644px;width:48px;height:2px;background:#3c444a;"></div>

<!--S1-->
</body></html>
